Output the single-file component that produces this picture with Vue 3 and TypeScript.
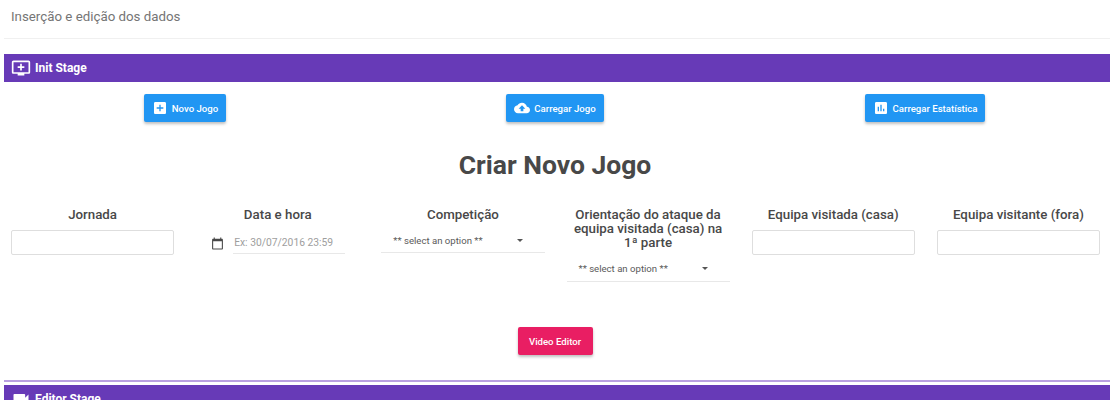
<script setup lang="ts">
interface Field { label: string; kind: 'input' | 'date' | 'select' }
const fields: Field[] = [
  { label: 'Jornada', kind: 'input' },
  { label: 'Data e hora', kind: 'date' },
  { label: 'Competição', kind: 'select' },
  { label: 'Orientação do ataque da equipa visitada (casa) na 1ª parte', kind: 'select' },
  { label: 'Equipa visitada (casa)', kind: 'input' },
  { label: 'Equipa visitante (fora)', kind: 'input' },
]
</script>

<template>
  <div class="page">
    <header class="top">Inserção e edição dos dados</header>
    <section class="bar first">
      <svg class="bar-icon" viewBox="0 0 24 24"><path fill="currentColor" d="M21 3H3c-1.1 0-2 .9-2 2v12c0 1.1.9 2 2 2h5v2h8v-2h5c1.1 0 2-.9 2-2V5c0-1.1-.9-2-2-2zm0 14H3V5h18v12zm-5-7v2h-3v3h-2v-3H8v-2h3V7h2v3h3z"/></svg>
      <span>Init Stage</span>
    </section>
    <div class="actions">
      <div class="action">
        <button class="btn blue">
          <svg class="btn-icon" viewBox="0 0 24 24"><path fill="currentColor" d="M19 3H5c-1.11 0-2 .9-2 2v14c0 1.1.89 2 2 2h14c1.1 0 2-.9 2-2V5c0-1.1-.9-2-2-2zm-2 10h-4v4h-2v-4H7v-2h4V7h2v4h4v2z"/></svg>
          Novo Jogo
        </button>
      </div>
      <div class="action">
        <button class="btn blue">
          <svg class="btn-icon" viewBox="0 0 24 24"><path fill="currentColor" d="M19.35 10.04C18.67 6.59 15.64 4 12 4 9.11 4 6.6 5.64 5.35 8.04 2.34 8.36 0 10.91 0 14c0 3.31 2.69 6 6 6h13c2.76 0 5-2.24 5-5 0-2.64-2.05-4.78-4.65-4.96zM14 13v4h-4v-4H7l5-5 5 5h-3z"/></svg>
          Carregar Jogo
        </button>
      </div>
      <div class="action">
        <button class="btn blue">
          <svg class="btn-icon" viewBox="0 0 24 24"><path fill="currentColor" d="M19 3H5c-1.1 0-2 .9-2 2v14c0 1.1.9 2 2 2h14c1.1 0 2-.9 2-2V5c0-1.1-.9-2-2-2zM9 17H7v-7h2v7zm4 0h-2V7h2v10zm4 0h-2v-4h2v4z"/></svg>
          Carregar Estatística
        </button>
      </div>
    </div>
    <h1 class="title">Criar Novo Jogo</h1>
    <div class="fields">
      <div v-for="f in fields" :key="f.label" class="field">
        <h2 class="label">{{ f.label }}</h2>
        <div v-if="f.kind === 'input'" class="input"></div>
        <div v-else-if="f.kind === 'date'" class="date">
          <svg class="cal" viewBox="0 0 24 24"><path fill="currentColor" d="M20 3h-1V1h-2v2H7V1H5v2H4c-1.1 0-2 .9-2 2v16c0 1.1.9 2 2 2h16c1.1 0 2-.9 2-2V5c0-1.1-.9-2-2-2zm0 18H4V8h16v13z"/></svg>
          <div class="date-input">Ex: 30/07/2016 23:59</div>
        </div>
        <div v-else class="select">
          <span>** select an option **</span>
          <i class="caret"></i>
        </div>
      </div>
    </div>
    <div class="video">
      <button class="btn pink">Video Editor</button>
    </div>
    <hr class="rule" />
    <section class="bar">
      <svg class="bar-icon" viewBox="0 0 24 24"><path fill="currentColor" d="M17 10.5V7c0-.55-.45-1-1-1H4c-.55 0-1 .45-1 1v10c0 .55.45 1 1 1h12c.55 0 1-.45 1-1v-3.5l4 4v-11l-4 4z"/></svg>
      <span>Editor Stage</span>
    </section>
  </div>
</template>

<style>
html, body { margin: 0; padding: 0; background: #fff; overflow: hidden; }
</style>

<style scoped>
.page {
  width: 1110px;
  height: 400px;
  overflow: hidden;
  font-family: Roboto, "Liberation Sans", sans-serif;
  color: #484848;
  box-sizing: border-box;
}
.top {
  margin-left: 4px;
  height: 38px;
  padding-left: 7px;
  font-size: 13.3px;
  line-height: 34px;
  color: #757575;
  border-bottom: 1px solid #f0f0f0;
}
.bar {
  margin-left: 4px;
  height: 28px;
  background: #673ab7;
  color: #fff;
  display: flex;
  align-items: center;
  gap: 4px;
  padding-left: 7px;
  font-size: 12px;
  font-weight: 700;
}
.bar.first { margin-top: 15px; }
.bar-icon { width: 20px; height: 20px; }
.actions {
  display: grid;
  grid-template-columns: repeat(3, 1fr);
  margin-top: 12px;
}
.action { display: flex; justify-content: center; }
.btn {
  display: inline-flex;
  align-items: center;
  justify-content: center;
  height: 28px;
  border: 0;
  border-radius: 2px;
  color: #fff;
  font-family: inherit;
  font-size: 9.6px;
  font-weight: 500;
  padding: 0;
  box-shadow: 0 2px 3px rgba(0, 0, 0, 0.25);
}
.blue { background: #2196f3; padding: 0 8px; gap: 4px; }
.pink { background: #e91e63; width: 75px; padding-top: 1px; }
.btn-icon { width: 16px; height: 16px; }
.title {
  margin: 28px 0 0;
  text-align: center;
  font-size: 26.5px;
  line-height: 30px;
  font-weight: 700;
  color: #484848;
}
.fields {
  display: grid;
  grid-template-columns: repeat(6, 1fr);
  width: 1111px;
  margin-top: 28px;
}
.field { padding: 0 11px; box-sizing: border-box; }
.label {
  margin: 0;
  text-align: center;
  font-size: 13.3px;
  line-height: 14.2px;
  font-weight: 500;
  color: #484848;
}
.input {
  margin-top: 8px;
  height: 23px;
  border: 1px solid #dedede;
  border-radius: 2px;
  background: #fff;
}
.date { display: flex; align-items: center; margin-top: 3px; padding-left: 15px; }
.cal { width: 13px; height: 13px; margin: 7px 9px 0 0; flex: none; color: #484848; }
.date-input {
  width: 112px;
  height: 29px;
  padding: 6px 0 0 1px;
  line-height: 23px;
  font-size: 10.3px;
  color: #9e9e9e;
  border-bottom: 1px solid #e8e8e8;
  box-sizing: border-box;
  white-space: nowrap;
}
.select {
  margin-top: 1px;
  height: 30px;
  display: flex;
  align-items: center;
  justify-content: space-between;
  padding: 5px 22px 0 12px;
  box-sizing: border-box;
  font-size: 9.6px;
  color: #5a5a5a;
  border-bottom: 1px solid #e8e8e8;
}
.caret {
  width: 0;
  height: 0;
  border-left: 3.5px solid transparent;
  border-right: 3.5px solid transparent;
  border-top: 3.5px solid #555;
}
.video { display: flex; justify-content: center; margin-top: 45px; }
.rule {
  margin: 25px 0 0 4px;
  border: 0;
  height: 2px;
  background: #b9a0e0;
}
.page > .bar:last-child { margin-top: 3px; }
</style>
